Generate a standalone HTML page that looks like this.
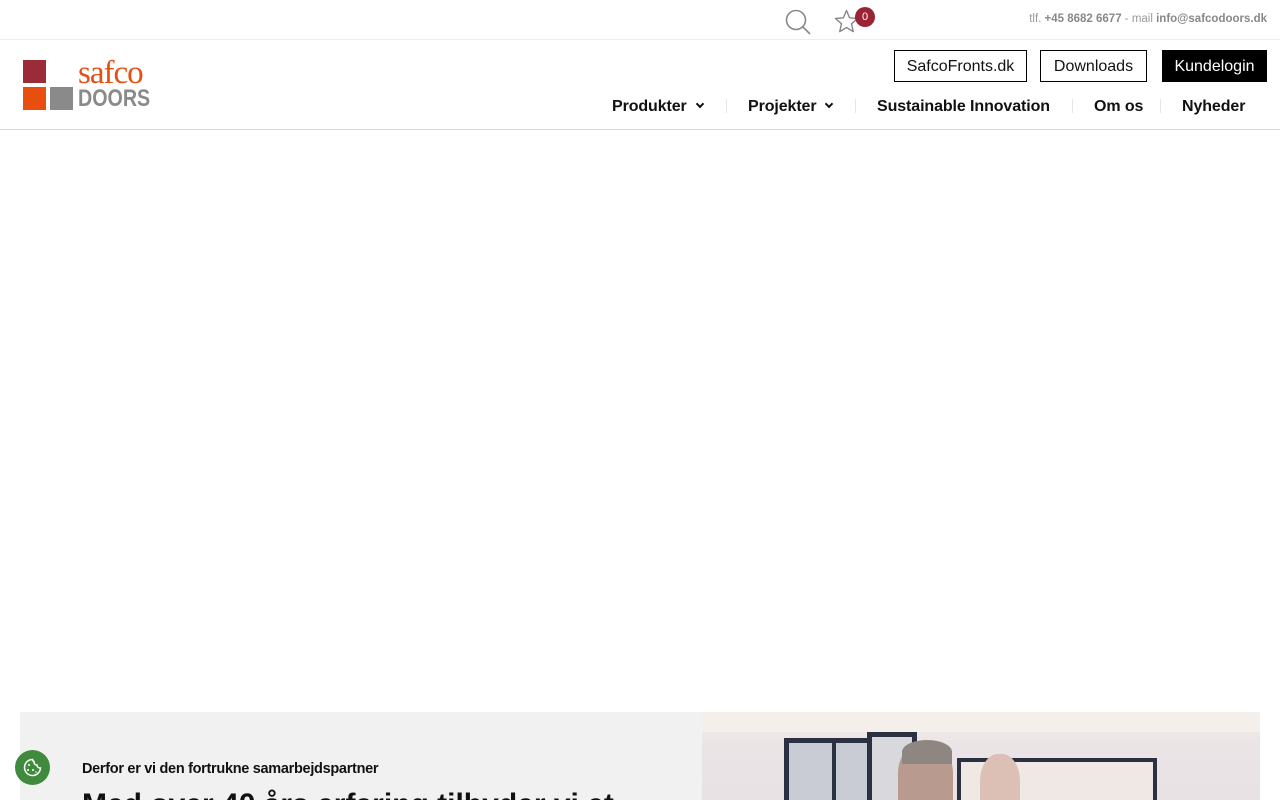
<!DOCTYPE html>
<html><head><meta charset="utf-8"><style>
*{margin:0;padding:0;box-sizing:border-box}
body{width:1280px;height:800px;overflow:hidden;background:#fff;font-family:"Liberation Sans",Arial,sans-serif;position:relative;color:#111}
.top{height:40px;border-bottom:1px solid #eee;position:relative}
.contact{position:absolute;right:13px;top:13px;font-size:11.5px;color:#999}
.contact b{color:#888}
.hdr{height:90px;border-bottom:1px solid #d8d8d8;position:relative}
.btn{position:absolute;top:10px;height:32px;border:1px solid #000;font-size:16px;line-height:32px;text-align:center;color:#111}
.nav{position:absolute;top:58px;font-size:16px;font-weight:bold;color:#111;letter-spacing:-0.1px}
.sep{position:absolute;top:59px;width:1px;height:14px;background:#e5e5e5}
.chev{display:inline-block;width:6px;height:6px;border-right:2px solid #111;border-bottom:2px solid #111;transform:rotate(45deg);margin-left:10px;position:relative;top:-4px}
</style></head><body>
<div class="top">
<svg style="position:absolute;left:784px;top:8px" width="28" height="28" viewBox="0 0 28 28"><circle cx="12" cy="12" r="9.5" fill="none" stroke="#888" stroke-width="1.6"/><line x1="19" y1="19" x2="26" y2="26" stroke="#888" stroke-width="1.6"/></svg>
<svg style="position:absolute;left:834px;top:9px" width="26" height="26" viewBox="0 0 26 26"><path d="M12.5 1.5 L15.6 8.8 L23.5 9.5 L17.5 14.8 L19.3 22.6 L12.5 18.5 L5.7 22.6 L7.5 14.8 L1.5 9.5 L9.4 8.8 Z" fill="none" stroke="#888" stroke-width="1.4" stroke-linejoin="round"/></svg>
<div style="position:absolute;left:855px;top:7px;width:20px;height:20px;border-radius:50%;background:#9b2335;color:#fff;font-size:11px;text-align:center;line-height:20px">0</div>
<div class="contact">tlf. <b>+45 8682 6677</b> - mail <b>info@safcodoors.dk</b></div>
</div>
<div class="hdr">
<div style="position:absolute;left:23px;top:20px;width:23px;height:23px;background:#9b2b38"></div>
<div style="position:absolute;left:23px;top:47px;width:23px;height:23px;background:#e84e10"></div>
<div style="position:absolute;left:50px;top:47px;width:23px;height:23px;background:#8a8a8a"></div>
<div style="position:absolute;left:78px;top:18px;font-family:'Liberation Serif',serif;font-size:33px;color:#e84e10;line-height:30px;letter-spacing:-1px">safco</div>
<div style="position:absolute;left:78px;top:47px;font-size:24px;font-weight:bold;color:#8a8a8a;line-height:24px;transform:scaleX(0.82);transform-origin:left">DOORS</div>
<div class="btn" style="left:894px;width:133px">SafcoFronts.dk</div>
<div class="btn" style="left:1040px;width:107px">Downloads</div>
<div class="btn" style="left:1162px;width:105px;background:#000;color:#fff">Kundelogin</div>
<div class="nav" style="left:612px">Produkter<span class="chev"></span></div>
<div class="sep" style="left:726px"></div>
<div class="nav" style="left:748px">Projekter<span class="chev"></span></div>
<div class="sep" style="left:855px"></div>
<div class="nav" style="left:877px">Sustainable Innovation</div>
<div class="sep" style="left:1072px"></div>
<div class="nav" style="left:1094px">Om os</div>
<div class="sep" style="left:1160px"></div>
<div class="nav" style="left:1182px">Nyheder</div>
</div>
<div style="position:absolute;left:20px;top:712px;width:682px;height:88px;background:#f1f1f1;overflow:hidden">
<div style="position:absolute;left:62px;top:49px;font-size:14.5px;font-weight:bold;color:#111;letter-spacing:-0.3px">Derfor er vi den fortrukne samarbejdspartner</div>
<div style="position:absolute;left:62px;top:76px;font-size:30px;font-weight:bold;color:#111;white-space:nowrap">Med over 40 års erfaring tilbyder vi et</div>
</div>
<div style="position:absolute;left:702px;top:712px;width:558px;height:88px;background:linear-gradient(180deg,#f3ece9 0%,#ebe4e6 40%,#e8e2e4 100%);overflow:hidden">
<div style="position:absolute;left:0;top:0;width:558px;height:20px;background:#f5efec"></div>
<div style="position:absolute;left:82px;top:26px;width:120px;height:70px;background:#c9ccd4;border:5px solid #2b3140;border-bottom:none"></div>
<div style="position:absolute;left:130px;top:26px;width:4px;height:70px;background:#2b3140"></div>
<div style="position:absolute;left:165px;top:20px;width:50px;height:70px;border:5px solid #2b3140;border-bottom:none;background:#d9d8dd"></div>
<div style="position:absolute;left:255px;top:46px;width:200px;height:50px;border:4px solid #2b3140;border-bottom:none;background:#f0e8e5"></div>
<div style="position:absolute;left:196px;top:30px;width:55px;height:70px;border-radius:45% 45% 0 0;background:#b89a8f"></div>
<div style="position:absolute;left:200px;top:28px;width:50px;height:24px;border-radius:50% 50% 0 0;background:#8e8680"></div>
<div style="position:absolute;left:278px;top:42px;width:40px;height:60px;border-radius:45% 45% 0 0;background:#dcc0b6"></div>
</div>
<div style="position:absolute;left:15px;top:750px;width:35px;height:35px;border-radius:50%;background:#3f8a3c">
<svg width="35" height="35" viewBox="0 0 35 35"><path d="M17.5 9.5a8 8 0 1 0 8 8.5 3 3 0 0 1-3.5-3 3 3 0 0 1-3-3.5 2.5 2.5 0 0 1-1.5-2z" fill="none" stroke="#fff" stroke-width="1.5"/><circle cx="14" cy="15" r="1" fill="#fff"/><circle cx="18" cy="20" r="1" fill="#fff"/><circle cx="13" cy="20" r="1" fill="#fff"/><circle cx="21" cy="22" r="0.8" fill="#fff"/></svg>
</div>
</body></html>
